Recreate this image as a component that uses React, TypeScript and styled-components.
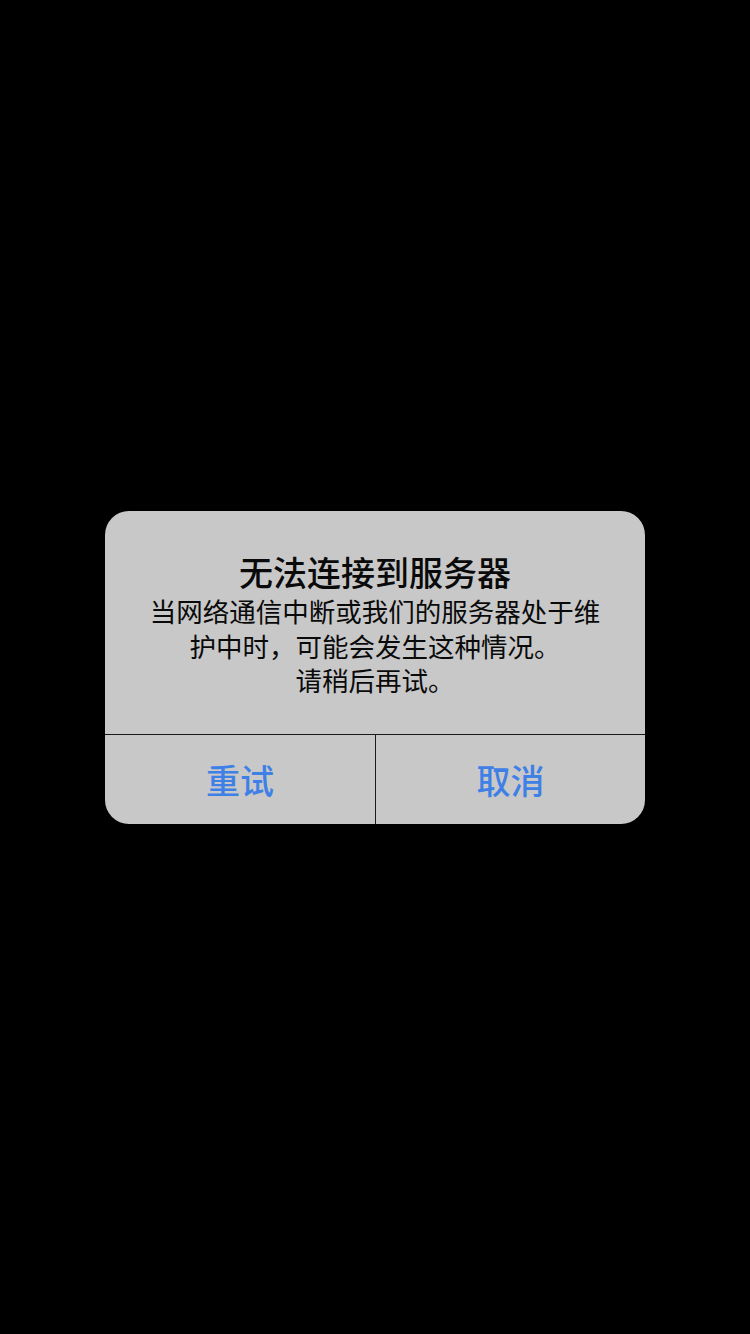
import React from 'react';
import styled, { createGlobalStyle } from 'styled-components';

const GlobalStyle = createGlobalStyle`
  html, body {
    margin: 0;
    padding: 0;
    background: #000;
  }
  body {
    font-family: "Noto Sans CJK SC", "Noto Sans", sans-serif;
  }
`;

function App() {
  return (
    <>
      <GlobalStyle />
      <Screen>
        <Alert>
          <Content>
            <Title>无法连接到服务器</Title>
            <Message>
              当网络通信中断或我们的服务器处于维
              <br />
              护中时，可能会发生这种情况。
              <br />
              请稍后再试。
            </Message>
          </Content>
          <Actions>
            <ActionBtn>重试</ActionBtn>
            <ActionBtn divided>取消</ActionBtn>
          </Actions>
        </Alert>
      </Screen>
    </>
  );
}

const Screen = styled.div`
  width: 750px;
  height: 1334px;
  background: #000;
  display: flex;
  justify-content: center;
  padding-top: 511px;
  box-sizing: border-box;
`;

const Alert = styled.div`
  width: 540px;
  height: 313px;
  background: #c8c8c8;
  border-radius: 24px;
  overflow: hidden;
  display: flex;
  flex-direction: column;
`;

const Content = styled.div`
  height: 224px;
  box-sizing: border-box;
  padding: 38px 10px 0;
  text-align: center;
  color: #0a0a0a;
  border-bottom: 1.5px solid #1a1a1a;
`;

const Title = styled.h1`
  margin: 0;
  font-size: 34px;
  font-weight: 500;
  line-height: 45px;
`;

const Message = styled.p`
  margin: 0;
  font-size: 26.5px;
  font-weight: 400;
  line-height: 34.5px;
`;

const Actions = styled.div`
  flex: 1;
  display: grid;
  grid-template-columns: 1fr 1fr;
`;

const ActionBtn = styled.button<{ divided?: boolean }>`
  border: none;
  border-left: ${(p) => (p.divided ? '1.5px solid #1a1a1a' : 'none')};
  background: transparent;
  color: #3f80e6;
  font-family: "Noto Sans CJK SC", "Noto Sans", sans-serif;
  font-size: 34px;
  font-weight: 500;
  padding: 0;
  display: flex;
  align-items: center;
  justify-content: center;
`;

export default App;
